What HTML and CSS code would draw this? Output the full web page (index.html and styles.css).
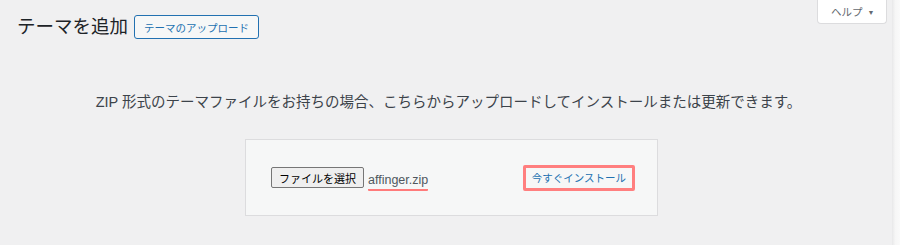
FILE: index.html
```html
<!DOCTYPE html>
<html lang="ja">
<head>
    <meta charset="UTF-8">
    <meta name="viewport" content="width=device-width, initial-scale=1.0">
    <title>テーマを追加</title>
    <link rel="stylesheet" href="styles.css">
</head>
<body>
    <div class="page">
        <div class="wrap">
            <div class="topbar">
                <div class="title-row">
                    <h1 class="page-title">テーマを追加</h1>
                    <a class="page-title-action" href="#">テーマのアップロード</a>
                </div>
                <button class="help-tab" type="button">ヘルプ <span class="help-arrow">▼</span></button>
            </div>

            <p class="install-help">ZIP 形式のテーマファイルをお持ちの場合、こちらからアップロードしてインストールまたは更新できます。</p>

            <form class="upload-form">
                <div class="file-field">
                    <button class="file-button" type="button">ファイルを選択</button>
                    <!-- underline is the red annotation from the screenshot -->
                    <span class="file-name">affinger.zip</span>
                </div>
                <button class="install-button" type="button">今すぐインストール</button>
            </form>
        </div>
        <div class="edge"></div>
    </div>
</body>
</html>
```

FILE: styles.css
```css
body {
    margin: 0;
    background-color: #f0f0f1;
    font-family: "Liberation Sans", "Noto Sans CJK JP", sans-serif;
    color: #3c434a;
}

.page {
    display: flex;
    height: 245px;
}

.wrap {
    flex: 1;
}

/* Right edge of the window */
.edge {
    width: 8px;
    background: linear-gradient(to right, #e8e8e9, #f6f6f6 40%, #fafafa);
}

.topbar {
    display: flex;
    justify-content: space-between;
    align-items: flex-start;
}

.title-row {
    display: flex;
    align-items: center;
    gap: 6px;
    padding: 15px 0 0 17px;
}

.page-title {
    margin: 0;
    font-size: 18.5px;
    font-weight: 400;
    line-height: 24px;
    color: #1d2327;
}

.page-title-action {
    display: flex;
    align-items: center;
    height: 24px;
    box-sizing: border-box;
    padding: 0 9px;
    border: 1px solid #2271b1;
    border-radius: 3px;
    background-color: #f6f7f7;
    color: #2271b1;
    font-size: 10.5px;
    text-decoration: none;
}

.help-tab {
    height: 24px;
    margin-right: 5px;
    padding: 0 10px 0 13px;
    width: 70px;
    border: 1px solid #dcdcde;
    border-top: none;
    border-radius: 0 0 4px 4px;
    background-color: #fff;
    color: #646970;
    font-family: inherit;
    font-size: 10.5px;
    white-space: nowrap;
    text-align: left;
}

.help-arrow {
    font-size: 7px;
    margin-left: 2px;
    vertical-align: 1px;
}

.install-help {
    margin: 53px 0 27px;
    padding-left: 5px;
    text-align: center;
    font-size: 14.5px;
    line-height: 20px;
    color: #3c434a;
}

.upload-form {
    display: flex;
    justify-content: space-between;
    align-items: center;
    width: 413px;
    height: 77px;
    box-sizing: border-box;
    margin: 0 0 0 245px;
    padding: 0 22px 0 25px;
    border: 1px solid #dcdcde;
    background-color: #f6f7f7;
}

.file-field {
    display: flex;
    align-items: center;
    gap: 4px;
}

.file-button {
    height: 21px;
    padding: 0 7px;
    border: 1px solid #767676;
    border-radius: 2px;
    background-color: #efefef;
    color: #000;
    font-family: inherit;
    font-size: 11px;
}

.file-name {
    padding: 4px 0 2px;
    border-bottom: 2.5px solid #ff7b7b;
    border-radius: 1px;
    font-size: 12.5px;
    color: #50575e;
    position: relative;
    top: 2px;
}

.install-button {
    height: 26px;
    padding: 0 6px;
    border: 3px solid #ff7f7f;
    border-radius: 2px;
    background-color: #f6f7f7;
    color: #2271b1;
    font-family: inherit;
    font-size: 10.5px;
}
```
